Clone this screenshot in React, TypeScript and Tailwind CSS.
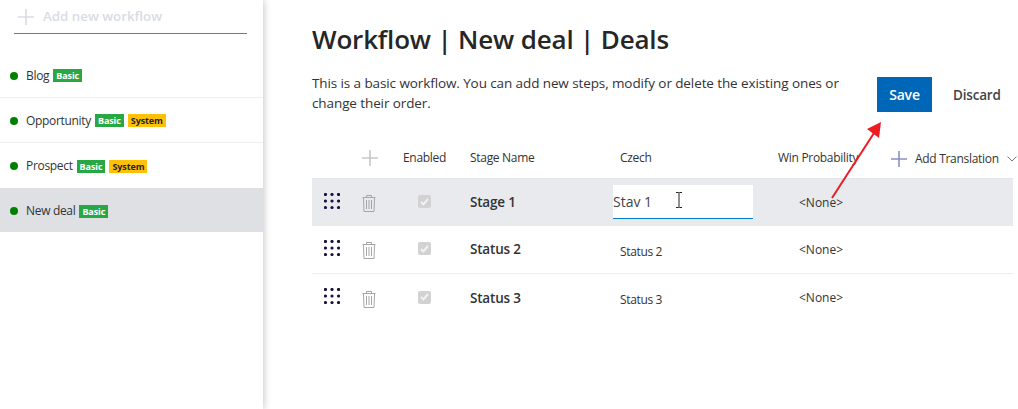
import React from "react";

function Plus({ className, size = 16, color }: { className?: string; size?: number; color: string }) {
  return (
    <svg width={size} height={size} viewBox="0 0 16 16" className={className}>
      <path d="M8 0V16M0 8H16" stroke={color} strokeWidth="1.6" />
    </svg>
  );
}

function Grip() {
  const pts = [0, 1, 2];
  return (
    <svg width="16" height="16" viewBox="0 0 16 16">
      {pts.map((r) =>
        pts.map((c) => <circle key={`${r}${c}`} cx={1.5 + c * 6.5} cy={1.5 + r * 6.5} r="1.6" fill="#1c1145" />)
      )}
    </svg>
  );
}

function Trash() {
  return (
    <svg width="14" height="17" viewBox="0 0 14 17" fill="none" stroke="#a6a6a6" strokeWidth="1">
      <path d="M0.5 2.5H13.5M4.5 2.5V0.5H9.5V2.5M1.5 2.5L2 16.5H12L12.5 2.5M4.5 5V14M7 5V14M9.5 5V14" />
    </svg>
  );
}

function Check() {
  return (
    <div className="w-[13px] h-[13px] rounded-[2px] bg-[#d2d2d2] flex items-center justify-center">
      <svg width="9" height="8" viewBox="0 0 9 8" fill="none" stroke="#f2f2f2" strokeWidth="2">
        <path d="M1 4L3.4 6.4L8 1" />
      </svg>
    </div>
  );
}

function Tag({ kind }: { kind: "Basic" | "System" }) {
  return (
    <span
      className={`inline-flex items-center h-[13px] px-[3px] text-[9px] font-bold leading-none -tracking-[0.1px] ${
        kind === "Basic" ? "bg-[#28a745] text-white" : "bg-[#ffc107] text-[#212529]"
      }`}
    >
      {kind}
    </span>
  );
}

function Workflow({ name, tags, active, border }: { name: string; tags: ("Basic" | "System")[]; active?: boolean; border?: boolean }) {
  return (
    <div
      className={`flex items-center pl-[10px] ${active ? "h-[44px] pt-[2px] bg-[#dee0e4]" : "h-[45px] pt-[1px]"} ${
        border ? "border-b border-[#eeeeee]" : ""
      }`}
    >
      <span className="w-[8px] h-[8px] rounded-full bg-[#008000] mr-[8px]" />
      <span className="text-[12px] text-[#333333] mr-[4px] -tracking-[0.32px]">{name}</span>
      <div className="flex gap-[4px]">
        {tags.map((t) => (
          <Tag key={t} kind={t} />
        ))}
      </div>
    </div>
  );
}

function Row({ name, value, active, border, h }: { name: string; value?: string; active?: boolean; border?: boolean; h: string }) {
  return (
    <div className={`flex items-center ${h} ${active ? "bg-[#e8eaed]" : ""} ${border ? "border-b border-[#eeeeee]" : ""}`}>
      <div className="w-[49px] pl-[12px] pb-[4px] shrink-0">
        <Grip />
      </div>
      <div className="w-[42px] pl-[1px] pt-[2px] shrink-0">
        <Trash />
      </div>
      <div className="w-[67px] pl-[15px] pb-[2px] shrink-0">
        <Check />
      </div>
      <div className="w-[143px] shrink-0 text-[13.5px] font-semibold text-[#333333] -tracking-[0.2px]">{name}</div>
      <div className="w-[179px] shrink-0">
        {active ? (
          <div className="w-[140px] h-[34px] -mt-[1px] bg-white border-b-[1.5px] border-[#0078d4] flex items-center relative text-[14px] font-medium text-[#444444]">
            Stav 1
            <svg width="8" height="16" viewBox="0 0 8 16" className="absolute left-[62px] top-[7px]" fill="none" stroke="#222222" strokeWidth="1">
              <path d="M1 0.5H3.5L4 1V15L3.5 15.5H1M7 0.5H4.5L4 1M7 15.5H4.5L4 15" />
            </svg>
          </div>
        ) : (
          <span className="pl-[7px] text-[12px] text-[#333333] -tracking-[0.35px]">{value}</span>
        )}
      </div>
      <div className="text-[12px] text-[#333333] pl-[7px]">&lt;None&gt;</div>
    </div>
  );
}

export default function App() {
  return (
    <div className="relative w-[1018px] h-[409px] overflow-hidden bg-white flex font-['Open_Sans','Noto_Sans',sans-serif] text-[#333333]">
      <aside className="w-[263px] h-full shrink-0 bg-white shadow-[0_0_8px_rgba(0,0,0,0.28)] z-10">
        <div className="ml-[14px] w-[233px] h-[34px] border-b border-[#77787b] flex items-center pl-[4px] gap-[9px]">
          <Plus size={16} color="#d8dce4" />
          <span className="text-[13.3px] font-semibold text-[#d8dce4]">Add new workflow</span>
        </div>
        <div className="mt-[19px]">
          <Workflow name="Blog" tags={["Basic"]} border />
          <Workflow name="Opportunity" tags={["Basic", "System"]} border />
          <Workflow name="Prospect" tags={["Basic", "System"]} />
          <Workflow name="New deal" tags={["Basic"]} active />
        </div>
      </aside>

      <main className="flex-1 pl-[49px] min-w-0">
        <h1 className="mt-[20px] text-[26px] leading-[38px] font-semibold text-[#262626] -tracking-[0.18px]">Workflow | New deal | Deals</h1>
        <div className="flex mt-[15px] h-[64px]">
          <p className="w-[560px] pr-[20px] text-[13.5px] leading-[20px] text-[#333333] -tracking-[0.1px]">
            This is a basic workflow. You can add new steps, modify or delete the existing ones or change their order.
          </p>
          <button className="mt-[4px] ml-[5px] w-[55px] h-[35px] bg-[#0067b8] text-white text-[14px] font-semibold -tracking-[0.2px]">Save</button>
          <span className="mt-[4px] ml-[21px] h-[35px] pt-[1px] flex items-center text-[13.5px] font-semibold text-[#444444] -tracking-[0.2px]">Discard</span>
        </div>
        <div className="flex items-center h-[41px] text-[12px] text-[#333333] -tracking-[0.3px]">
          <div className="w-[49px] shrink-0" />
          <div className="w-[42px] shrink-0 pl-[1px]">
            <Plus size={16} color="#c8c8c8" />
          </div>
          <div className="w-[67px] shrink-0">Enabled</div>
          <div className="w-[150px] shrink-0">Stage Name</div>
          <div className="w-[158px] shrink-0">Czech</div>
          <div className="w-[113px] shrink-0 whitespace-nowrap">Win Probability</div>
          <div className="flex items-center shrink-0 whitespace-nowrap pt-[2px]">
            <Plus size={16} color="#8a8fc7" className="mr-[8px]" />
            <span>Add Translation</span>
            <svg width="10" height="6" viewBox="0 0 10 6" fill="none" stroke="#777777" className="ml-[8px]">
              <path d="M0.5 0.5L5 5L9.5 0.5" />
            </svg>
          </div>
        </div>
        <div className="w-[701px] border-t border-[#e2e4e8]">
          <Row name="Stage 1" active h="h-[47px]" />
          <Row name="Status 2" value="Status 2" border h="h-[48px]" />
          <Row name="Status 3" value="Status 3" h="h-[48px]" />
        </div>
      </main>

      <svg className="absolute left-[825px] top-[115px] z-20" width="65" height="90" viewBox="0 0 65 90" fill="none">
        <path d="M7 83L49 18" stroke="#ed1c24" strokeWidth="2" />
        <path d="M56 7L42 14L54 23Z" fill="#ed1c24" />
      </svg>
    </div>
  );
}
